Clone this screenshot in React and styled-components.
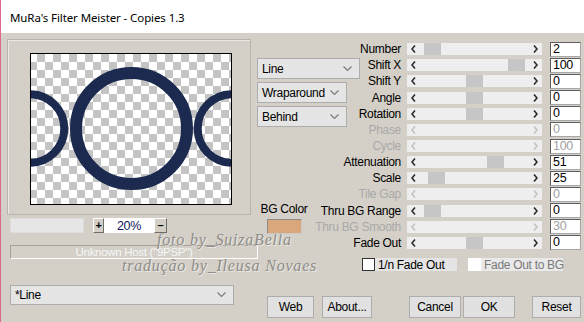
import React from 'react';
import styled, { createGlobalStyle } from 'styled-components';

const GlobalStyle = createGlobalStyle`
  html, body { margin: 0; padding: 0; background: #d4d0c8; }
  body { width: 584px; height: 322px; overflow: hidden; }
  * { box-sizing: border-box; }
`;

const ui = `"Liberation Sans", Arial, sans-serif`;

const params = [
  { label: 'Number', value: '2', pos: 17 },
  { label: 'Shift X', value: '100', pos: 101 },
  { label: 'Shift Y', value: '0', pos: 59 },
  { label: 'Angle', value: '0', pos: 59 },
  { label: 'Rotation', value: '0', pos: 59 },
  { label: 'Phase', value: '0', off: true },
  { label: 'Cycle', value: '100', off: true },
  { label: 'Attenuation', value: '51', pos: 80 },
  { label: 'Scale', value: '25', pos: 21 },
  { label: 'Tile Gap', value: '0', off: true },
  { label: 'Thru BG Range', value: '0', pos: 17 },
  { label: 'Thru BG Smooth', value: '30', off: true },
  { label: 'Fade Out', value: '0', pos: 59 },
];

const Window = styled.div`
  width: 584px;
  height: 322px;
  border-left: 1px solid #e2678f;
  display: flex;
  flex-direction: column;
  background: #d4d0c8;
`;

const TitleBar = styled.div`
  height: 33px;
  flex: none;
  background: #fff;
  display: flex;
  align-items: center;
  padding: 1px 0 0 9px;
  font: 11.5px "Noto Sans", "Liberation Sans", sans-serif;
  letter-spacing: -0.1px;
  color: #000;
`;

const Body = styled.div`
  position: relative;
  flex: 1;
  display: flex;
  padding-top: 6px;
  font: 11.5px ${ui};
  letter-spacing: -0.3px;
  color: #000;
`;

const LeftColumn = styled.div`
  width: 249px;
  margin-left: 6px;
  display: flex;
  flex-direction: column;
`;

const PreviewGroup = styled.div`
  width: 244px;
  height: 176px;
  border: 1px solid #b9b5ae;
  box-shadow: inset 1px 1px 0 #ebe9e4;
  padding: 13px 0 0 22px;
`;

const Preview = styled.div`
  width: 202px;
  height: 152px;
  border: 1px solid #000;
  background-color: #fff;
  background-image: conic-gradient(#c4c4c4 25%, #fff 0 50%, #c4c4c4 0 75%, #fff 0);
  background-size: 16px 16px;
  background-position: -2px 0;
  svg { display: block; }
`;

const ZoomRow = styled.div`
  margin: 3px 0 0 3px;
  height: 15px;
  display: flex;
`;

const Progress = styled.div`
  width: 74px;
  margin-right: 9px;
  background: #e6e6e6;
  border: 1px solid #dcdcdc;
`;

const StepButton = styled.div`
  width: ${p => p.$w}px;
  display: flex;
  align-items: center;
  justify-content: center;
  background: #d4d0c8;
  border: 1px solid;
  border-color: #fff #6f6d68 #6f6d68 #fff;
  font: bold 11px "Liberation Sans", Arial, sans-serif;
  line-height: 1;
`;

const ZoomField = styled.div`
  width: 50px;
  background: #fff;
  display: flex;
  align-items: center;
  justify-content: center;
  color: #14145e;
  font-size: 12.5px;
`;

const HostBox = styled.div`
  margin: 12px 0 0 3px;
  width: 248px;
  height: 14px;
  border: 1px solid;
  border-color: #a5a19a #fff #fff #a5a19a;
  color: #f6f6f6;
  text-align: center;
  line-height: 12px;
`;

const Combo = styled.div`
  width: ${p => p.$w}px;
  height: ${p => p.$h || 21}px;
  margin: ${p => p.$m || 0};
  background: #e5e5e5;
  border: 1px solid #adadad;
  display: flex;
  align-items: center;
  justify-content: space-between;
  padding: 0 7px 0 4px;
  flex: none;
  font-size: 12px;
`;

const RightArea = styled.div`
  width: 326px;
  padding-top: 2px;
  display: flex;
  flex-direction: column;
`;

const TopGrid = styled.div`
  display: grid;
  grid-template-columns: 44px 62px 220px;
`;

const DropdownCol = styled.div`
  grid-column: 1 / 3;
  grid-row: 1;
  z-index: 1;
  padding: 17px 0 0 1px;
  display: flex;
  flex-direction: column;
  align-items: flex-start;
  gap: 3px;
`;

const BGBlock = styled.div`
  margin: 72px 0 0 6px;
  width: 42px;
  display: flex;
  flex-direction: column;
  align-items: center;
  line-height: 14px;
  font-size: 12px;
  white-space: nowrap;
`;

const Swatch = styled.div`
  width: 35px;
  height: 15px;
  margin-top: 3px;
  background: #daa67b;
  border: 1px solid;
  border-color: #8b8b8b #c9c9c9 #c9c9c9 #8b8b8b;
`;

const ParamList = styled.div`
  grid-column: 2 / 4;
  grid-row: 1;
  display: flex;
  flex-direction: column;
`;

const Row = styled.div`
  height: 16.17px;
  display: flex;
  align-items: center;
`;

const Label = styled.div`
  width: 101px;
  display: flex;
  justify-content: flex-end;
  white-space: nowrap;
  font-size: 12px;
  color: ${p => (p.$off ? '#a9a9a9' : '#000')};
`;

const Slider = styled.div`
  position: relative;
  width: 135px;
  height: 12px;
  margin-left: 6px;
  background: #eeeeee;
  display: flex;
  align-items: center;
  justify-content: space-between;
  padding: 0 4px 0 4px;
`;

const Thumb = styled.div`
  position: absolute;
  top: 0;
  width: 17px;
  height: 12px;
  background: #c6c6c6;
`;

const Value = styled.div`
  width: 31px;
  height: 15px;
  margin-left: 8px;
  background: #fff;
  border: 1px solid;
  border-color: #5e5e5e #a6a6a6 #a6a6a6 #5e5e5e;
  padding-left: 2px;
  line-height: 13px;
  font-size: 12.5px;
  color: ${p => (p.$off ? '#a0a0a0' : '#000')};
`;

const CheckRow = styled.div`
  margin: 7px 0 0 106px;
  height: 13px;
  display: flex;
  gap: 11px;
`;

const CheckItem = styled.div`
  width: 95px;
  display: flex;
  align-items: center;
  gap: 3px;
  background: ${p => (p.$off ? '#e9e9e9' : '#e4e4e4')};
  color: ${p => (p.$off ? '#7a7a7a' : '#000')};
  font-size: 12px;
  white-space: nowrap;
`;

const Box = styled.div`
  width: 13px;
  height: 13px;
  flex: none;
  background: #fff;
  border: 1px solid ${p => (p.$off ? '#fff' : '#333')};
`;

const ButtonRow = styled.div`
  margin: 25px 0 0 11px;
  display: flex;
`;

const Button = styled.div`
  width: ${p => p.$w}px;
  height: 22px;
  margin-left: ${p => p.$gap || 0}px;
  background: #e1e1e1;
  border: 1px solid #adadad;
  display: flex;
  align-items: center;
  justify-content: center;
  font-size: 12px;
`;

const Watermark = styled.div`
  position: absolute;
  left: ${p => p.$x}px;
  top: ${p => p.$y}px;
  font: italic 16px "Liberation Serif", serif;
  letter-spacing: 0.8px;
  color: #8f8c87;
  text-shadow: 1px 1px 0 rgba(255, 255, 255, 0.55);
  white-space: nowrap;
  pointer-events: none;
`;

const Chevron = ({ dir, off }) => (
  <svg width="5" height="8" viewBox="0 0 5 8">
    <polyline
      points={dir === 'left' ? '4,0.5 1,4 4,7.5' : '1,0.5 4,4 1,7.5'}
      fill="none"
      stroke={off ? '#c2c2c2' : '#2b2b2b'}
      strokeWidth="1.6"
    />
  </svg>
);

const DownArrow = () => (
  <svg width="9" height="6" viewBox="0 0 9 6">
    <polyline points="0.5,0.5 4.5,4.5 8.5,0.5" fill="none" stroke="#7a7a7a" strokeWidth="1.2" />
  </svg>
);

const Rings = () => (
  <svg width="200" height="150" viewBox="0 0 200 150">
    <g fill="none" stroke="#1b2a4e">
      <circle cx="100.5" cy="74.5" r="55.5" strokeWidth="12" />
      <circle cx="-1" cy="74.5" r="34.3" strokeWidth="8" />
      <circle cx="201" cy="74.5" r="34.3" strokeWidth="8" />
    </g>
  </svg>
);

export default function App() {
  return (
    <Window>
      <GlobalStyle />
      <TitleBar>MuRa's Filter Meister - Copies 1.3</TitleBar>
      <Body>
        <LeftColumn>
          <PreviewGroup>
            <Preview>
              <Rings />
            </Preview>
          </PreviewGroup>
          <ZoomRow>
            <Progress />
            <StepButton $w={11}>+</StepButton>
            <ZoomField>20%</ZoomField>
            <StepButton $w={13}>–</StepButton>
          </ZoomRow>
          <HostBox>Unknown Host ("9PSP")</HostBox>
          <Combo $w={224} $h={20} $m="26px 0 0 3px">
            <span>*Line</span>
            <DownArrow />
          </Combo>
        </LeftColumn>
        <RightArea>
          <TopGrid>
            <DropdownCol>
              <Combo $w={103}>
                <span>Line</span>
                <DownArrow />
              </Combo>
              <Combo $w={90}>
                <span>Wraparound</span>
                <DownArrow />
              </Combo>
              <Combo $w={90}>
                <span>Behind</span>
                <DownArrow />
              </Combo>
              <BGBlock>
                BG Color
                <Swatch />
              </BGBlock>
            </DropdownCol>
            <ParamList>
              {params.map(p => (
                <Row key={p.label}>
                  <Label $off={p.off}>{p.label}</Label>
                  <Slider>
                    {!p.off && <Thumb style={{ left: p.pos }} />}
                    <Chevron dir="left" off={p.off} />
                    <Chevron dir="right" off={p.off} />
                  </Slider>
                  <Value $off={p.off}>{p.value}</Value>
                </Row>
              ))}
            </ParamList>
          </TopGrid>
          <CheckRow>
            <CheckItem>
              <Box />
              1/n Fade Out
            </CheckItem>
            <CheckItem $off>
              <Box $off />
              Fade Out to BG
            </CheckItem>
          </CheckRow>
          <ButtonRow>
            <Button $w={47}>Web</Button>
            <Button $w={50} $gap={8}>About...</Button>
            <Button $w={52} $gap={37}>Cancel</Button>
            <Button $w={52} $gap={2}>OK</Button>
            <Button $w={49} $gap={17}>Reset</Button>
          </ButtonRow>
        </RightArea>
        <Watermark $x={156} $y={198}>foto by_SuizaBella</Watermark>
        <Watermark $x={121} $y={224}>tradução by_Ileusa Novaes</Watermark>
      </Body>
    </Window>
  );
}
